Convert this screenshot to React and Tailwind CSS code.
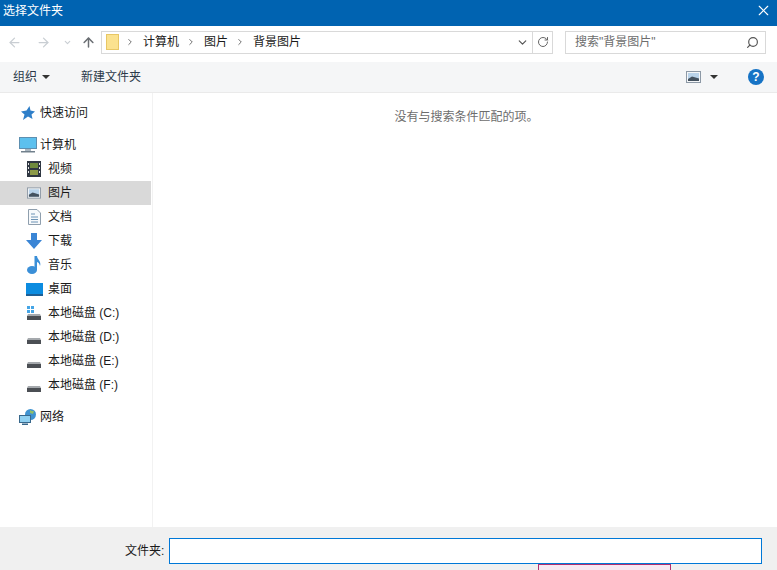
import React from 'react';
import { ArrowLeft, ArrowRight, ArrowUp, ChevronDown, ChevronRight, RotateCw, Search, X } from 'lucide-react';

const FONT = "font-['Liberation_Sans','Noto_Sans_CJK_SC',sans-serif]";

const PictureIcon = ({ className = 'w-[15px] h-[12px]' }) => (
    <svg viewBox="0 0 15 12" className={className}>
        <rect x="0.5" y="0.5" width="14" height="11" fill="#f4f6f8" stroke="#8d99a6" />
        <rect x="2" y="2" width="11" height="8" fill="#b9d3ea" />
        <path d="M2 8 L6 5.5 L13 7.5 V10 H2 Z" fill="#44525f" />
    </svg>
);

const VideoIcon = () => (
    <svg viewBox="0 0 14 16" className="w-[14px] h-[16px]">
        <rect width="14" height="16" fill="#2f3742" />
        <rect x="3" y="2" width="8" height="5" fill="#6f8a3c" />
        <rect x="3" y="9" width="8" height="5" fill="#8c9a48" />
        <path d="M1 2h1v2H1zM1 6h1v2H1zM1 10h1v2H1zM12 2h1v2h-1zM12 6h1v2h-1zM12 10h1v2h-1z" fill="#e6e6e6" />
    </svg>
);

const DocIcon = () => (
    <svg viewBox="0 0 13 16" className="w-[13px] h-[16px]">
        <path d="M0.5 0.5 H9 L12.5 4 V15.5 H0.5 Z" fill="#f7f9fb" stroke="#8f9fae" />
        <path d="M3 5h4M3 8h7M3 10.5h7M3 13h7" stroke="#6d93b5" />
    </svg>
);

const DownloadIcon = () => (
    <svg viewBox="0 0 16 16" className="w-[16px] h-[16px] shrink-0">
        <path d="M5 0 H11 V7 H16 L8 16 L0 7 H5 Z" fill="#3a85d5" />
    </svg>
);

const MusicIcon = () => (
    <svg viewBox="0 0 14 18" className="w-[14px] h-[18px]">
        <ellipse cx="5" cy="14" rx="5" ry="4" fill="#3a8fd8" />
        <path d="M7.5 14 V0 H10 C10.5 4 14.5 5 13 10 C12.5 7.5 11.5 6.5 10 6 V14 Z" fill="#3a8fd8" />
    </svg>
);

const DesktopIcon = () => (
    <svg viewBox="0 0 17 13" className="w-[17px] h-[13px] shrink-0">
        <rect width="17" height="13" fill="#0c8ce0" />
        <rect y="11" width="17" height="2" fill="#1d5f95" />
    </svg>
);

const DriveIcon = ({ windows }) => (
    <svg viewBox="0 0 16 16" className="w-[16px] h-[16px] shrink-0">
        {windows && <path d="M1 1h3v3H1zM5 1h3v3H5zM1 5h3v3H1zM5 5h3v3H5z" fill="#45a5e6" />}
        <path d="M2 9 H14 L15 11 H1 Z" fill="#a5a9ad" />
        <rect x="1" y="11" width="14" height="4" fill="#4b4f54" />
    </svg>
);

const ComputerIcon = () => (
    <svg viewBox="0 0 18 16" className="w-[18px] h-[16px]">
        <rect x="0.5" y="0.5" width="17" height="11" fill="#5cc0ee" stroke="#5d8fb0" />
        <path d="M6 12h6v2H6z" fill="#a9b6c0" />
        <path d="M2 14h14v1.5H2z" fill="#71808c" />
    </svg>
);

const NetworkIcon = () => (
    <svg viewBox="0 0 18 16" className="w-[18px] h-[16px]">
        <circle cx="11.5" cy="5.5" r="5.5" fill="#3f93d1" />
        <path d="M11 1 C12 2 14 2 15 2 L14 5 L11 4 Z" fill="#8fbf6a" />
        <rect x="0.5" y="6.5" width="11" height="7" fill="#8fd0f1" stroke="#38688c" />
        <path d="M3 14.5h6V16H3z" fill="#38688c" />
    </svg>
);

const StarIcon = () => (
    <svg viewBox="0 0 14 14" className="w-[14px] h-[14px]">
        <path d="M8.5 0 L9.5 4.5 L14 5.5 L10.5 8.5 L11.5 13 L7 10.5 L2 14 L3.5 8.5 L0 5.5 L5.5 4.5 Z" fill="#2f7fc9" />
    </svg>
);

const NavRow = ({ icon, label, indent, active, className = '' }) => (
    <div className={`h-6 flex items-center ${indent ? 'pl-[27px] gap-[7px]' : 'pl-[19px] gap-[3px]'} ${active ? 'bg-[#d9d9d9]' : ''} ${className}`}>
        <span className={`${indent ? 'w-[14px]' : 'w-[18px]'} flex justify-center`}>{icon}</span>
        <span className="text-[12px] text-[#1a1a1a] whitespace-nowrap">{label}</span>
    </div>
);

const App = () => {
    return (
        <div className={`w-[777px] h-[570px] flex flex-col overflow-hidden bg-white ${FONT}`}>
            {/* Title bar */}
            <div className="h-[26px] shrink-0 bg-[#0063b1] flex items-center justify-between pl-[3px] pr-[5px] pb-[5px] text-white">
                <span className="text-[12px]">选择文件夹</span>
                <X size={17} strokeWidth={1.6} />
            </div>

            {/* Address row */}
            <div className="h-[36px] shrink-0 flex items-center pb-[4px]">
                <div className="w-[101px] pl-[7px] flex items-center text-[#c9ced3]">
                    <ArrowLeft size={15} />
                    <ArrowRight size={15} className="ml-[14px]" />
                    <ChevronDown size={9} strokeWidth={3} className="ml-[12px]" />
                    <ArrowUp size={15} strokeWidth={2.4} className="ml-[9px] text-[#6b6f74]" />
                </div>
                <div className="w-[452px] h-[23px] flex items-center border border-[#d9d9d9] text-[12px] text-[#1a1a1a]">
                    <svg viewBox="0 0 13 16" className="w-[13px] h-[16px] ml-[4px]">
                        <rect x="0.5" y="0.5" width="12" height="15" fill="#fbe28f" stroke="#e8c765" />
                    </svg>
                    <ChevronRight size={10} strokeWidth={2} className="ml-[6px] text-[#555]" />
                    <span className="ml-[8px]">计算机</span>
                    <ChevronRight size={10} strokeWidth={2} className="ml-[7px] text-[#555]" />
                    <span className="ml-[8px]">图片</span>
                    <ChevronRight size={10} strokeWidth={2} className="ml-[7px] text-[#555]" />
                    <span className="ml-[8px]">背景图片</span>
                    <ChevronDown size={13} strokeWidth={2.2} className="ml-auto mr-[3px] text-[#555]" />
                    <div className="w-[20px] h-full border-l border-[#d9d9d9] flex items-center justify-center">
                        <RotateCw size={12} className="text-[#666]" />
                    </div>
                </div>
                <div className="ml-[12px] w-[201px] h-[23px] flex items-center justify-between border border-[#d9d9d9] pl-[9px] pr-[6px]">
                    <span className="text-[12px] text-[#6d6d6d]">搜索"背景图片"</span>
                    <Search size={13} strokeWidth={2.2} className="text-[#555] -scale-x-100" />
                </div>
            </div>

            {/* Toolbar */}
            <div className="h-[31px] shrink-0 bg-[#f5f6f7] border-b border-[#eaeaea] flex items-center pl-[13px] pr-[13px] text-[12px] text-[#2b3a4a]">
                <span>组织</span>
                <span className="ml-[5px] w-0 h-0 border-x-[4px] border-x-transparent border-t-[4px] border-t-[#333]" />
                <span className="ml-[31px]">新建文件夹</span>
                <div className="ml-auto flex items-center">
                    <PictureIcon />
                    <span className="ml-[9px] w-0 h-0 border-x-[4px] border-x-transparent border-t-[4px] border-t-[#333]" />
                    <span className="ml-[30px] w-[16px] h-[16px] rounded-full bg-[#1673c5] text-white text-[12px] font-bold flex items-center justify-center">?</span>
                </div>
            </div>

            {/* Main */}
            <div className="flex-1 min-h-0 flex">
                <div className="w-[153px] shrink-0 border-r border-[#f2f2f2] pr-[1px] pt-[8px]">
                    <NavRow icon={<StarIcon />} label="快速访问" className="mb-2" />
                    <NavRow icon={<ComputerIcon />} label="计算机" />
                    <NavRow indent icon={<VideoIcon />} label="视频" />
                    <NavRow indent active icon={<PictureIcon />} label="图片" />
                    <NavRow indent icon={<DocIcon />} label="文档" />
                    <NavRow indent icon={<DownloadIcon />} label="下载" />
                    <NavRow indent icon={<MusicIcon />} label="音乐" />
                    <NavRow indent icon={<DesktopIcon />} label="桌面" />
                    <NavRow indent icon={<DriveIcon windows />} label="本地磁盘 (C:)" />
                    <NavRow indent icon={<DriveIcon />} label="本地磁盘 (D:)" />
                    <NavRow indent icon={<DriveIcon />} label="本地磁盘 (E:)" />
                    <NavRow indent icon={<DriveIcon />} label="本地磁盘 (F:)" />
                    <NavRow icon={<NetworkIcon />} label="网络" className="mt-2" />
                </div>
                <div className="flex-1 flex justify-center pt-[15px] pl-[3px]">
                    <span className="text-[12px] text-[#6d6d6d]">没有与搜索条件匹配的项。</span>
                </div>
            </div>

            {/* Bottom */}
            <div className="h-[43px] shrink-0 bg-[#f0f0f0] pt-[11px] pl-[125px] pr-[15px]">
                <div className="flex items-center">
                    <span className="text-[12px] text-[#1a1a1a] w-[44px] whitespace-nowrap">文件夹:</span>
                    <div className="flex-1 h-[26px] bg-white border border-[#0078d7]" />
                </div>
                <div className="ml-[413px] w-[133px] h-[20px] border border-[#b0306f] bg-[#f7e8f1]" />
            </div>
        </div>
    );
};

export default App;
